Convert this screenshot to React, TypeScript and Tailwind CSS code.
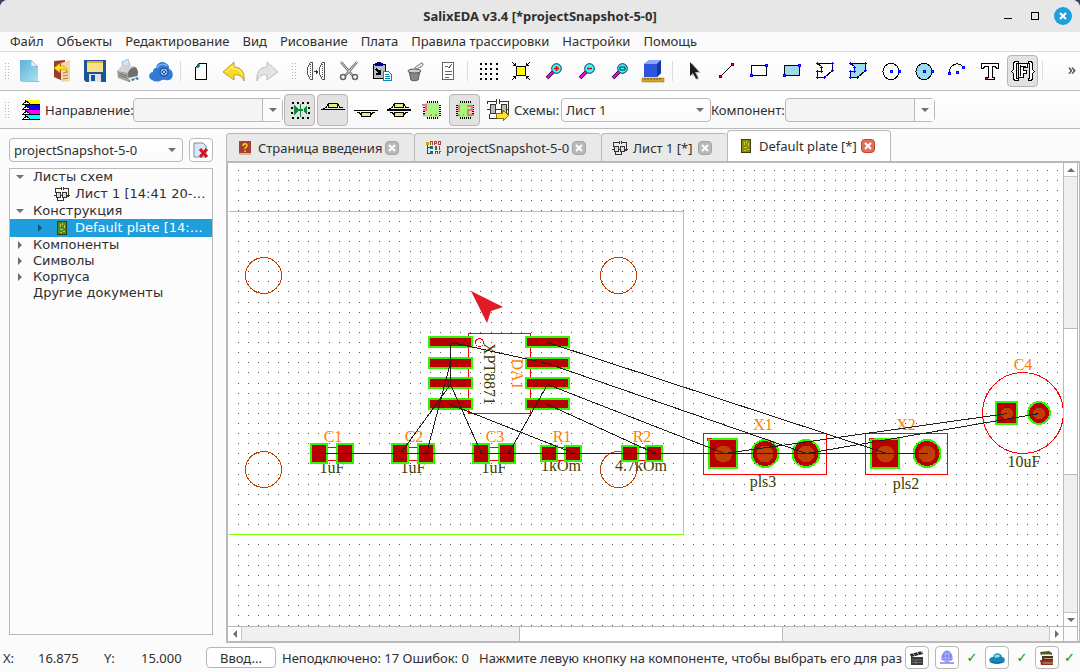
import React from 'react';

/* ---------- toolbar icons, all on a 24px box ---------- */

interface IconProps {
  children: React.ReactNode;
  crisp?: boolean;
}

function Icon({ children, crisp = false }: IconProps) {
  return (
    <svg
      className="size-6 shrink-0"
      viewBox="0 0 24 24"
      fill="none"
      aria-hidden="true"
      shapeRendering={crisp ? 'crispEdges' : 'auto'}
    >
      {children}
    </svg>
  );
}

const NewIcon = () => (
  <Icon>
    <defs>
      <linearGradient id="newDoc" x1="0" y1="0" x2="1" y2="1">
        <stop offset="0" stopColor="#5fb0d6" />
        <stop offset="1" stopColor="#a9e0f2" />
      </linearGradient>
    </defs>
    <path d="M5 22h17l1 1H4z" fill="#8a8a8a" opacity=".6" />
    <path d="M3 1h11l7 7v14H3z" fill="url(#newDoc)" />
    <path d="M14 1l7 7c-3-1-5-1-7 0z" fill="#d9f3fb" stroke="#5fb0d6" strokeWidth=".6" />
  </Icon>
);

const OpenIcon = () => (
  <Icon>
    <path d="M4 2l11-1v20l-2 1-9-4z" fill="#9c3b2c" />
    <path d="M11 4l9-3v21l-9 1z" fill="#f3d7a8" />
    <path d="M13 14l5-1M13 17l5-1M13 20l5-1" stroke="#b87b4c" />
    <path d="M4 9l6-5v3c4-.5 7 1 7 6-1.500-2.500-4-3-7-2.500V14z" fill="#ffe11f" stroke="#b98a00" strokeWidth=".6" />
  </Icon>
);

const SaveIcon = () => (
  <Icon>
    <path d="M1 1h22v22H3l-2-2z" fill="#1d5494" />
    <path d="M4 2h16v11H4z" fill="#fbe08a" />
    <path d="M4 2h16v2H4z" fill="#e2a93c" />
    <path d="M6 15h12v8H6z" fill="#dfe3e8" />
    <path d="M8 16h4v6H8z" fill="#1d5494" />
  </Icon>
);

const PrinterIcon = () => (
  <Icon>
    <path d="M6 3l6-3 2 6-7 3z" fill="#cfe4fb" stroke="#86a7cc" strokeWidth=".7" />
    <path d="M1 12l6-6 13 2 2 5-1 6-8 4-11-4z" fill="#a2a2a2" />
    <path d="M1 12l6-6 13 2-8 6z" fill="#d4d4d4" />
    <path d="M12 14c1-5 7-8 9-4l1 3-1 6-8 4z" fill="#6e6e6e" />
    <path d="M3 14l8 3M3 16l8 3" stroke="#777" />
    <path d="M12 19l9-2 3 3-9 3z" fill="#e9f2ff" />
    <path d="M15 20l3-1 1 2-3 1z" fill="#38a838" />
    <path d="M19 19l2-1 2 2-2 1z" fill="#3e6be0" />
  </Icon>
);

const CloudIcon = () => (
  <Icon>
    <path d="M3 21c-4-2-4-7 1-8 0-3 1-4 3-4 1-6 7-8 11-4 2 1 2 3 2 5 4 1 5 7 2 10-4 3-6 0-9 1-4 2-7 2-10 0z" fill="#2f7bd6" />
    <path d="M8 9c2-4 7-5 10-2" stroke="#7db5f3" strokeWidth="1.500" />
    <circle cx="15" cy="13" r="4.500" fill="#1a4e9b" />
    <circle cx="15" cy="13" r="3" stroke="#a9c8ee" />
    <path d="M13 11l4 4M17 11l-4 4" stroke="#a9c8ee" />
  </Icon>
);

const PageIcon = () => (
  <Icon crisp>
    <path d="M10.500 4.500h7v16h-11v-12z" fill="#fff" stroke="#000" />
    <path d="M7 8l3-4v4z" fill="#008080" stroke="#000" strokeWidth=".5" />
  </Icon>
);

const UndoIcon = () => (
  <Icon>
    <path d="M1 13L12 3v5c7 0 11 5 10 14-2-5-5-7-10-6v5z" fill="#fbdc1c" stroke="#a88c2c" strokeWidth=".8" />
    <path d="M4 13l7-6v3c5 0 8 2 9 6" stroke="#fff6a8" />
  </Icon>
);

const RedoIcon = () => (
  <Icon>
    <path d="M23 13L12 3v5C5 8 1 13 2 22c2-5 5-7 10-6v5z" fill="#e3e3e3" stroke="#b4b4b4" strokeWidth=".8" />
  </Icon>
);

const MirrorIcon = () => (
  <Icon crisp>
    <path d="M8.500 3.500h-2l-3 5v7l3 5h2z" stroke="#555" />
    <path d="M6.500 5v14" stroke="#555" strokeDasharray="1 1" />
    <path d="M20.500 3.500h-2l-3 5v7l3 5h2z" stroke="#555" />
    <path d="M18.500 5v14" stroke="#555" strokeDasharray="1 1" />
    <path d="M10 12.500h4M12 10.500v4M13 11.500v2" stroke="#333" />
  </Icon>
);

const CutIcon = () => (
  <Icon>
    <path d="M4 3l12 14M20 3L8 17" stroke="#666" strokeWidth="2.500" />
    <path d="M4 3l12 14M20 3L8 17" stroke="#fff" strokeWidth=".8" />
    <circle cx="6" cy="18" r="2.500" stroke="#666" strokeWidth="1.500" />
    <circle cx="18" cy="18" r="2.500" stroke="#666" strokeWidth="1.500" />
  </Icon>
);

const PasteIcon = () => (
  <Icon crisp>
    <path d="M3.500 5.500h12v14h-12z" fill="#b8bcc6" stroke="#000" />
    <path d="M5 4h8v3H5zM7 3h4v2H7z" fill="#0000a0" />
    <path d="M6 10l4 4M10 11v4H6" stroke="#000" strokeWidth="1.500" />
    <path d="M13.500 12.500h5l3 3v6h-8z" fill="#fff" stroke="#008cba" />
    <path d="M15 15.500h4M15 17.500h5M15 19.500h5" stroke="#008cba" />
  </Icon>
);

const TrashIcon = () => (
  <Icon>
    <path d="M6 12h11l-2 9c-2 1-5 1-7 0z" fill="#888" stroke="#555" />
    <ellipse cx="11.500" cy="12" rx="6.500" ry="2" fill="#ccc" stroke="#555" />
    <path d="M12 9c0-2 5-3 6-5 3 0 2 3 0 4-2 0-3 1-4 2z" fill="#eee" stroke="#666" />
  </Icon>
);

const CheckListIcon = () => (
  <Icon crisp>
    <path d="M6.500 3.500h11v17h-11z" fill="#fff" stroke="#666" />
    <path d="M9 7.500h3M9 12.500h7M9 15.500h7M9 18h4" stroke="#666" />
    <path d="M11 7l2 2 3-4" stroke="#666" />
  </Icon>
);

const GridIcon = () => (
  <Icon crisp>
    {[4, 9, 14, 19].map(y =>
      [4, 9, 14, 20].map(x => <rect key={`${x}-${y}`} x={x} y={y} width="2" height="2" fill="#000" />)
    )}
  </Icon>
);

const FitIcon = () => (
  <Icon crisp>
    <path d="M7.500 7.500h9v9h-9z" fill="#ff0" stroke="#000" />
    <path d="M3 3l4 4M21 3l-4 4M3 21l4-4M21 21l-4-4M4 6.500h3M6.500 4v3M20 6.500h-3M17.500 4v3M4 17.500h3M6.500 17v3M20 17.500h-3M17.500 17v3" stroke="#000" />
  </Icon>
);

function ZoomIcon({ kind }: { kind: 'in' | 'out' | 'all' }) {
  return (
    <Icon>
      <path d="M5 19l6-6" stroke="#000" strokeWidth="3.500" />
      <path d="M5 19l6-6" stroke="#f0f" strokeWidth="2.200" />
      <circle cx="14.500" cy="9.500" r="4.800" fill="#3ff" stroke="#124" />
      {kind !== 'all' && <path d="M12 9.500h5" stroke="#e00" strokeWidth="1.600" />}
      {kind === 'in' && <path d="M14.500 7v5" stroke="#e00" strokeWidth="1.600" />}
      {kind === 'all' && <path d="M12 8h5v3h-5z" stroke="#124" />}
    </Icon>
  );
}

const CubeIcon = () => (
  <Icon>
    <path d="M3 5l5-4h12v13l-4 4H3z" fill="#2a55dc" />
    <path d="M3 5l5-4h12l-4 4z" fill="#86a9ff" />
    <path d="M16 5l4-4v13l-4 4z" fill="#1636a8" />
    <path d="M1 19h22v4H1z" fill="#d8a42a" stroke="#8a6410" strokeWidth=".5" />
    <path d="M4 19v2M7 19v2M10 19v2M13 19v2M16 19v2M19 19v2" stroke="#6b4c08" strokeWidth=".8" />
  </Icon>
);

const PointerIcon = () => (
  <Icon>
    <path d="M11 4v14l3-3 2 6 2-1-2-6h4z" fill="#999" opacity=".6" />
    <path d="M9 3v14l3-3 3 6 2-1-3-6h4z" fill="#1c1c1c" />
  </Icon>
);

function Pins({ at }: { at: [number, number][] }) {
  return (
    <>
      {at.map(([x, y]) => (
        <g key={`${x}-${y}`}>
          <rect x={x - 1} y={y - 1} width="3" height="3" fill="#00f" />
          <rect x={x} y={y} width="1" height="1" fill="#f06" />
        </g>
      ))}
    </>
  );
}

const LineIcon = () => (
  <Icon crisp>
    <path d="M6 18L18 6" stroke="#000" />
    <Pins at={[[6, 17], [18, 5]]} />
  </Icon>
);

function RectIcon({ fill }: { fill: string }) {
  return (
    <Icon crisp>
      <path d="M4.500 6.500h15v10h-15z" fill={fill} stroke="#000" />
      <Pins at={[[4, 16], [19, 6]]} />
    </Icon>
  );
}

function PolygonIcon({ fill }: { fill: string }) {
  return (
    <Icon crisp>
      <path d="M4.500 4.500h15v7l-8 7h-7v-6h4v-5z" fill={fill} stroke="#000" />
      {[[4, 4], [19, 4], [19, 11], [11, 18], [4, 18], [4, 12], [8, 12], [8, 8]].map(([x, y]) => (
        <path key={`${x}-${y}`} d={`M${x - 1} ${y + 0.5}h3M${x + 0.5} ${y - 1}v3`} stroke="#00f" />
      ))}
    </Icon>
  );
}

function CircleIcon({ fill }: { fill: string }) {
  return (
    <Icon crisp>
      <circle cx="12" cy="12.500" r="8" fill={fill} stroke="#000" />
      <Pins at={[[12, 12], [20, 12]]} />
    </Icon>
  );
}

const ArcIcon = () => (
  <Icon crisp>
    <path d="M4.500 14C4 5 14 2 18.500 8.500" stroke="#000" />
    <Pins at={[[4, 14], [12, 13], [18, 8]]} />
  </Icon>
);

const TextIcon = () => (
  <Icon crisp>
    <path d="M3.500 4.500h17v5h-2l-1-2h-3v11h2v2h-8v-2h2v-11h-4l-1 2h-2z" fill="#fff" stroke="#000" />
    <Pins at={[[8, 19]]} />
  </Icon>
);

const ParamIcon = () => (
  <Icon crisp>
    <path d="M7.500 2.500h-4l-1 2v6l-2 2 2 2v5l1 2h4v-2h-2v-15h2zM17.500 2.500h3l1 2v6l2 2-2 2v5l-1 2h-3v-2h1v-15h-1z" fill="#fff" stroke="#000" />
    <path d="M7.500 4.500h9v4h-4v3h3v3h-3v4h-5v-14z" fill="#fff" stroke="#000" />
    <path d="M9.500 6v11M10 7h5" stroke="#000" />
  </Icon>
);

const LayersIcon = () => (
  <svg className="w-[18px] h-5 shrink-0" viewBox="0 0 18 20" fill="none" shapeRendering="crispEdges" aria-hidden="true">
    {['#ff0', '#00f', '#f0f', '#0ff'].map((fill, i) => (
      <g key={fill}>
        <path d={`M3 ${i * 5}h15v4H7z`} fill={fill} />
        <path d={`M0 ${i * 5 + 4.500}h18M3 ${i * 5}l5 4M1 ${i * 5 + 4}l4-3`} stroke="#000" />
      </g>
    ))}
  </svg>
);

const MeetIcon = () => (
  <Icon crisp>
    {[4, 9, 14, 19].map(x => (
      <g key={x} fill="#000">
        <rect x={x} y="4" width="2" height="2" />
        <rect x={x} y="19" width="2" height="2" />
      </g>
    ))}
    <path d="M3 9h2v2H3zM3 14h2v2H3zM20 9h2v2h-2zM20 14h2v2h-2z" fill="#000" />
    <path d="M6 7l5 5-5 5zM19 7l-5 5 5 5zM12 6h1v13h-1zM9 11h7v2H9z" fill="#0a8a3c" />
  </Icon>
);

function SideIcon({ top, bottom }: { top?: boolean; bottom?: boolean }) {
  return (
    <Icon crisp>
      {top && (
        <>
          <path d="M0 11.500h24M2 10.500h2M4 9.500h1l2-3h10l2 3h3" stroke="#000" />
          <path d="M7.500 5.500h9v4h-9z" fill="#d4f77c" stroke="#000" />
        </>
      )}
      {bottom && (
        <>
          <path d="M0 12.500h24M3 14.500h2l3 3h8l3-3h2" stroke="#000" />
          <path d="M7.500 14.500h9v4h-9z" fill={top ? '#fbd58a' : '#d4f77c'} stroke="#000" />
        </>
      )}
    </Icon>
  );
}

function ChipIcon({ numbered }: { numbered?: boolean }) {
  return (
    <Icon crisp>
      {[7, 9, 11, 13, 15, 17].map(p => (
        <path key={p} d={`M${p}.5 3v18M3 ${p}.5h18`} stroke="#000" />
      ))}
      <path d="M5 5h14v14H5z" fill="#a6f77c" />
      {numbered ? (
        <path d="M6 7v7M5 17h2M10 17h1M14 8h5v4h-4v5h6" stroke="#f0708c" strokeWidth="2" />
      ) : (
        <path d="M2 7h4v5H3M4 16v2M10 17h2M15 17h2" stroke="#f0708c" strokeWidth="2" />
      )}
    </Icon>
  );
}

const SheetIcon = ({ className = 'w-4 h-[14px]' }: { className?: string }) => (
  <svg className={`${className} shrink-0`} viewBox="0 0 16 14" fill="none" stroke="#333" shapeRendering="crispEdges" aria-hidden="true">
    <path d="M1.500 5.500v-4h5M9.500 1.500h5v8h-2M7.500 0v3M9.500 0v3M3.500 10v3h6v-2M0 8.500h16" />
    <path d="M2.500 5.500h4v5h-4zM8.500 5.500h4v5h-4z" fill="#ddd" />
  </svg>
);

const SheetGoIcon = () => (
  <Icon crisp>
    <path d="M1.500 6v-3h9M13.500 3.500h9v14M10.500 1v5M13.500 1v5M3.500 16v4h7M1 11.500h22" stroke="#333" />
    <path d="M4.500 6.500h5v9h-5zM15.500 6.500h5v9h-5z" fill="#bbb" stroke="#333" />
    <path d="M10 15h6v-3l7 5-6 6v-3h-6z" fill="#ffe034" stroke="#8d7400" />
  </Icon>
);

const PlateIcon = ({ fill }: { fill: string }) => (
  <svg className="w-[10px] h-[14px] shrink-0" viewBox="0 0 10 14" fill="none" shapeRendering="crispEdges" aria-hidden="true">
    <path d="M.5.5h9v13h-9z" fill={fill} stroke="#3b3d10" />
    <path d="M3.500 3v3M5.500 2v2M7.500 4v3M3 8.500h3M6 10.500h2M3 11.500h2" stroke="#c2c848" />
  </svg>
);

const BookIcon = () => (
  <svg className="w-3 h-4 shrink-0" viewBox="0 0 12 16" fill="none" aria-hidden="true">
    <path d="M0 1h12v14H0z" fill="#a3402f" />
    <path d="M0 13h12v2H0z" fill="#d9b899" />
    <path d="M4 6c0-3 4-3 4-.5C8 7 6 7 6 9M6 10.500v1.500" stroke="#ffd21f" strokeWidth="1.500" />
  </svg>
);

const ProjectIcon = () => (
  <svg className="size-4 shrink-0" viewBox="0 0 16 16" fill="none" shapeRendering="crispEdges" aria-hidden="true">
    <path d="M2.500 3v10h4M2.500 7.500h4" stroke="#444" />
    <path d="M1 2h3v3H1z" fill="#b8a800" />
    <path d="M5 6h3v3H5zM5 11h3v3H5z" fill="#087878" />
    <path d="M5.500 5V1.500h2V5M9.500 5V1.500h2v2h-2M13.500 1.500h2v3h-2z" stroke="#b04040" />
    <path d="M10.500 6.500h1v3h-1zM15 6.500h-1v3h1M10.500 14v-2.500h2V14M14.500 14v-2.500H16" stroke="#555" />
  </svg>
);

const DeleteDocIcon = () => (
  <svg className="size-4" viewBox="0 0 16 16" fill="none" aria-hidden="true">
    <path d="M1 1h9l3 3v11H1z" fill="#dbe7f6" stroke="#7b8ea8" />
    <path d="M7 7l7 8M14 7l-7 8" stroke="#d4141e" strokeWidth="3" />
  </svg>
);

const ClapperIcon = () => (
  <svg className="size-4" viewBox="0 0 16 16" aria-hidden="true">
    <path d="M2 7h12v8H2z" fill="#3a3a3a" />
    <path d="M1 4l12-3 1 3L2 7z" fill="#222" />
    <path d="M4 3l1.500 2.500M8 2l1.500 2.500M12 1l1 2" stroke="#ddd" />
    <path d="M3 10h10M3 12.500h10M7 10v4" stroke="#8a8a8a" strokeWidth=".6" />
  </svg>
);

const GlobeIcon = () => (
  <svg className="size-4" viewBox="0 0 16 16" fill="none" aria-hidden="true">
    <path d="M3 10c-1-12 11-12 10 0z" fill="#aab0fa" stroke="#8086f0" />
    <path d="M8 1v10M3 6h10M5.500 2.500c-1 3-1 5 0 8M10.500 2.500c1 3 1 5 0 8" stroke="#7278ea" strokeWidth=".8" />
    <path d="M1 12h4l1-1h4l1 1h4v2H1z" fill="#9aa0f5" />
  </svg>
);

const BlueCloudIcon = () => (
  <svg className="size-4" viewBox="0 0 16 16" aria-hidden="true">
    <path d="M2 13c-3-2-2-6 2-6 1-5 8-5 9 0 3 0 4 4 1 6-3 1-9 1-12 0z" fill="#1489b8" />
    <path d="M5 7c1-3 5-3 6-1-1 2-4 2-6 1z" fill="#7fe0f8" />
    <path d="M3 12c3 1.500 7 1.500 10 0" stroke="#075b80" fill="none" />
  </svg>
);

const BooksIcon = () => (
  <svg className="size-4" viewBox="0 0 16 16" aria-hidden="true">
    <path d="M1 2l9-1 3 2v2H2z" fill="#4e5b2c" />
    <path d="M3 6h11v4H3z" fill="#473020" />
    <path d="M1 10h13v5H2z" fill="#8c3126" />
    <path d="M3 4.500h9M5 8.500h9M4 13h10" stroke="#d8c49a" strokeWidth=".8" />
  </svg>
);

/* ---------- small widgets ---------- */

function ToolButton({ label, active, children }: { label: string; active?: boolean; children: React.ReactNode }) {
  return (
    <button
      title={label}
      aria-label={label}
      className={`flex h-8 w-[31px] mx-px shrink-0 items-center justify-center rounded-sm border ${
        active ? 'border-[#b6b6b6] bg-[#e2e2e2]' : 'border-transparent'
      }`}
    >
      {children}
    </button>
  );
}

const Separator = () => <div className="mx-[3px] h-5 w-px shrink-0 bg-[#dcdcdc]" />;

const Handle = () => (
  <svg className="w-4 h-4 shrink-0" viewBox="0 0 16 16" shapeRendering="crispEdges" aria-hidden="true">
    {[0, 3, 6, 9, 12, 15].map(y => (
      <path key={y} d={`M9 ${y}h1v1h-1zM12 ${y}h1v1h-1z`} fill="#b5b5b5" />
    ))}
  </svg>
);

const Caret = ({ dir = 'down', color = '#6f6f6f' }: { dir?: 'down' | 'right' | 'left' | 'up'; color?: string }) => {
  const paths = { down: 'M0 2h8L4 6z', up: 'M0 6h8L4 2z', right: 'M2 0v8l4-4z', left: 'M6 0v8L2 4z' };
  return (
    <svg className="size-2 shrink-0" viewBox="0 0 8 8" aria-hidden="true">
      <path d={paths[dir]} fill={color} />
    </svg>
  );
};

function Combo({ id, value, editable, className }: { id: string; value: string; editable?: boolean; className: string }) {
  return (
    <div className={`relative shrink-0 ${className}`}>
      <select
        id={id}
        aria-label={id}
        defaultValue={value}
        className={`h-6 w-full appearance-none rounded-sm border border-[#b9b9b9] pl-1 pr-6 text-[#2f2f2f] ${
          editable ? 'bg-[#f4f4f4]' : 'bg-gradient-to-b from-white to-[#fafafa]'
        }`}
      >
        <option>{value}</option>
      </select>
      <span
        className={`pointer-events-none absolute inset-y-px right-px flex w-5 items-center justify-center ${
          editable ? 'border-l border-[#b9b9b9] bg-[#fbfbfb]' : ''
        }`}
      >
        <Caret />
      </span>
    </div>
  );
}

function Tab({ title, icon, active, className }: { title: string; icon: React.ReactNode; active?: boolean; className: string }) {
  return (
    <div
      role="tab"
      aria-selected={!!active}
      className={`flex shrink-0 items-center gap-[3px] rounded-t-sm border border-b-0 border-[#b9b9b9] px-2 pr-[15px] ${
        active ? 'h-[31px] bg-white' : 'h-7 border-r-0 bg-[#e9e9e9]'
      } ${className}`}
    >
      <span className="flex w-5 shrink-0 justify-center">{icon}</span>
      <span className="flex-1 whitespace-nowrap">{title}</span>
      <button
        aria-label={`Закрыть ${title}`}
        className={`flex size-[14px] shrink-0 items-center justify-center rounded-sm border ${
          active ? 'border-[#c9412c] bg-[#e0705c]' : 'border-[#a3a3a3] bg-[#b9b9b9]'
        }`}
      >
        <svg className="size-2" viewBox="0 0 8 8" aria-hidden="true">
          <path d="M1 1l6 6M7 1L1 7" stroke="#fff" strokeWidth="2" />
        </svg>
      </button>
    </div>
  );
}

/* ---------- project tree ---------- */

interface TreeItem {
  text: string;
  level: number;
  caret?: 'down' | 'right';
  icon?: React.ReactNode;
  selected?: boolean;
}

const TREE: TreeItem[] = [
  { text: 'Листы схем', level: 0, caret: 'down' },
  { text: 'Лист 1 [14:41 20-…', level: 1, icon: <SheetIcon /> },
  { text: 'Конструкция', level: 0, caret: 'down' },
  { text: 'Default plate [14:…', level: 1, caret: 'right', icon: <PlateIcon fill="#4f8a1e" />, selected: true },
  { text: 'Компоненты', level: 0, caret: 'right' },
  { text: 'Символы', level: 0, caret: 'right' },
  { text: 'Корпуса', level: 0, caret: 'right' },
  { text: 'Другие документы', level: 0 },
];

function ProjectTree() {
  return (
    <ul className="flex-1 border border-[#b9b9b9] bg-[#fcfcfc] font-['DejaVu_Sans'] text-[13px]">
      {TREE.map(item => (
        <li
          key={item.text}
          className={`flex items-center ${item.level ? 'h-[18px] pl-5' : 'h-4'} ${
            item.selected ? 'bg-[#1f9ede] text-white' : 'text-[#2f2f2f]'
          }`}
        >
          <span className="flex w-[23px] shrink-0 items-center pl-1.5">
            {item.caret && <Caret dir={item.caret} color={item.selected ? '#1c4f74' : '#6f6f6f'} />}
          </span>
          {item.icon && <span className="flex w-[22px] shrink-0 justify-center pr-1">{item.icon}</span>}
          <span className="whitespace-nowrap">{item.text}</span>
        </li>
      ))}
    </ul>
  );
}

/* ---------- board drawing ---------- */

const PAD = { fill: '#b80000', stroke: '#32f500', strokeWidth: 2 };
const HOLE = '#bf4000';

// ratsnest: x1, y1, x2, y2
const NETS = [
  [450, 342, 450, 384],
  [451, 342, 547, 363],
  [547, 342, 886, 453],
  [547, 363, 806, 453],
  [547, 384, 724, 453],
  [547, 404, 655, 453],
  [547, 384, 508, 453],
  [450, 404, 574, 453],
  [450, 384, 400, 453],
  [450, 384, 481, 453],
  [450, 362, 426, 453],
  [319, 453, 927, 453],
  [724, 453, 1007, 413],
  [806, 453, 1039, 413],
];

const CHIPS = [
  { name: 'C1', value: '1uF', x: 310, w: 18, gap: 26, y: 443, h: 21, cx: 332 },
  { name: 'C2', value: '1uF', x: 391, w: 18, gap: 26, y: 443, h: 21, cx: 413 },
  { name: 'C3', value: '1uF', x: 472, w: 18, gap: 26, y: 443, h: 21, cx: 494 },
  { name: 'R1', value: '1kOm', x: 540, w: 18, gap: 24, y: 445, h: 17, cx: 561 },
  { name: 'R2', value: '4.7kOm', x: 621, w: 18, gap: 24, y: 445, h: 17, cx: 641 },
];

function Dots() {
  const dots: string[] = [];
  for (let row = 0; row < 100; row++) {
    for (let col = 0; col < 190; col++) {
      dots.push(`M${Math.floor(238 + col * 10.12)} ${Math.floor(170.5 + row * 10.12)}h1v1h-1z`);
    }
  }
  return <path d={dots.join('')} fill="#555" />;
}

function Board() {
  return (
    <svg className="block size-full" role="img" aria-label="Default plate" shapeRendering="crispEdges">
      <g transform="translate(-229 -163)" fontFamily="'Liberation Serif', serif" fontSize="16" textAnchor="middle">
        <Dots />
        <path d="M229 211.500h454.500v323H229" fill="none" stroke="#80ff00" />
        {[[263.5, 275.5], [618.5, 275.5], [263.5, 469.5], [618.5, 469.5]].map(([x, y]) => (
          <circle key={`${x}-${y}`} cx={x} cy={y} r="18" fill="none" stroke={HOLE} />
        ))}

        <rect x="468.500" y="333.500" width="62" height="80" fill="none" stroke="#f00" />
        {[336, 357, 377, 398].map(y => (
          <g key={y} {...PAD}>
            <rect x="429" y={y + 1} width="43" height="10" />
            <rect x="526" y={y + 1} width="43" height="10" />
          </g>
        ))}
        <circle cx="479.500" cy="342.500" r="4" fill="none" stroke="#f00" />
        <text transform="translate(484 374) rotate(90)" fill="#404000">XPT8871</text>
        <text transform="translate(512 374) rotate(90)" fill="#ff8000">DA1</text>

        {CHIPS.map(c => (
          <g key={c.name}>
            <text x={c.cx + 1} y="442" fill="#ff8000">{c.name}</text>
            <text x={c.cx} y={c.h > 20 ? 473 : 471} fill="#404000">{c.value}</text>
            <path d={`M${c.x + c.w} 447.5h${c.gap - c.w}M${c.x + c.w} 460.5h${c.gap - c.w}`} stroke="#f00" />
            <rect x={c.x + 1} y={c.y + 1} width={c.w - 2} height={c.h - 2} {...PAD} />
            <rect x={c.x + c.gap + 1} y={c.y + 1} width={c.w - 2} height={c.h - 2} {...PAD} />
          </g>
        ))}

        <rect x="703.500" y="433.500" width="123" height="41" fill="none" stroke="#f00" />
        <rect x="709" y="439" width="28" height="29" {...PAD} />
        <circle cx="765" cy="453.500" r="13.500" {...PAD} />
        <circle cx="806" cy="453.500" r="13.500" {...PAD} />
        <rect x="865.500" y="433.500" width="82" height="41" fill="none" stroke="#f00" />
        <rect x="871" y="439" width="28" height="29" {...PAD} />
        <circle cx="927" cy="453.500" r="13.500" {...PAD} />
        {[723.5, 765, 806, 885.5, 927].map(x => (
          <circle key={x} cx={x} cy="454" r="8.500" fill={HOLE} />
        ))}
        <path d="M707 441v-3h5M869 441v-3h5" fill="none" stroke="#c22" />

        <circle cx="1023" cy="413" r="40.500" fill="none" stroke="#f00" />
        <rect x="996" y="402" width="21" height="22" {...PAD} />
        <circle cx="1039" cy="413" r="11" {...PAD} />
        <circle cx="1007" cy="413.500" r="6" fill={HOLE} />
        <circle cx="1039" cy="413.500" r="6" fill={HOLE} />

        <g fill="#ff8000">
          <text x="763" y="430">X1</text>
          <text x="906" y="430">X2</text>
          <text x="1023" y="370">C4</text>
        </g>
        <g fill="#404000">
          <text x="763" y="487">pls3</text>
          <text x="906" y="489">pls2</text>
          <text x="1024" y="467">10uF</text>
        </g>

        {NETS.map(([x1, y1, x2, y2]) => (
          <path key={`${x1}-${y1}-${x2}-${y2}`} d={`M${x1 + 0.5} ${y1 + 0.5}L${x2 + 0.5} ${y2 + 0.5}`} stroke="#202020" />
        ))}
        <path d="M471 291l32 16-12 4-4 12z" fill="#e01b24" shapeRendering="auto" />
      </g>
    </svg>
  );
}

const MENU = ['Файл', 'Объекты', 'Редактирование', 'Вид', 'Рисование', 'Плата', 'Правила трассировки', 'Настройки', 'Помощь'];

function StatusButton({ label, children }: { label: string; children: React.ReactNode }) {
  return (
    <button aria-label={label} className="flex h-[23px] w-6 shrink-0 items-center justify-center rounded-sm border border-[#b6b6b6] bg-white">
      {children}
    </button>
  );
}

const Tick = ({ className = 'w-[26px]' }: { className?: string }) => (
  <span className={`${className} shrink-0 text-center font-['DejaVu_Sans'] text-[#108a10]`}>✓</span>
);

export default function App() {
  return (
    <div className="bg-[#34475c]">
      <div className="flex h-screen flex-col overflow-hidden rounded-t-lg bg-[#fbfbfb] font-['Noto_Sans',sans-serif] text-[13px] leading-4 text-[#2f2f2f]">
        <header className="flex h-8 shrink-0 items-center bg-[#e7e7e7] px-2">
          <div className="w-20" />
          <h1 className="flex-1 text-center text-[13px] font-bold">SalixEDA v3.4 [*projectSnapshot-5-0]</h1>
          <div className="flex w-20 items-center justify-end gap-[15px]">
            <button aria-label="Свернуть" className="mt-1 h-px w-2 bg-black" />
            <button aria-label="Развернуть" className="ml-1 size-2 border border-black" />
            <button aria-label="Закрыть" className="flex size-[18px] items-center justify-center rounded-full bg-[#1f9ede]">
              <svg className="size-2" viewBox="0 0 8 8" aria-hidden="true">
                <path d="M1 1l6 6M7 1L1 7" stroke="#fff" strokeWidth="2" />
              </svg>
            </button>
          </div>
        </header>

        <nav className="flex h-5 shrink-0 items-center gap-[13px] border-b border-[#dadada] px-[10px] pb-0.5">
          {MENU.map(item => (
            <button key={item} className="whitespace-nowrap">{item}</button>
          ))}
        </nav>

        <div className="flex h-[39px] shrink-0 items-center overflow-hidden border-b border-[#b9b9b9] bg-gradient-to-b from-white to-[#f8f8f8]">
          <div className="-ml-1 flex items-center">
            <Handle />
            <ToolButton label="Новый"><NewIcon /></ToolButton>
            <ToolButton label="Открыть"><OpenIcon /></ToolButton>
            <ToolButton label="Сохранить"><SaveIcon /></ToolButton>
            <ToolButton label="Печать"><PrinterIcon /></ToolButton>
            <ToolButton label="Облако"><CloudIcon /></ToolButton>
            <Separator />
            <ToolButton label="Страница"><PageIcon /></ToolButton>
            <ToolButton label="Отменить"><UndoIcon /></ToolButton>
            <ToolButton label="Повторить"><RedoIcon /></ToolButton>
            <Handle />
            <ToolButton label="Отразить"><MirrorIcon /></ToolButton>
            <ToolButton label="Вырезать"><CutIcon /></ToolButton>
            <ToolButton label="Вставить"><PasteIcon /></ToolButton>
            <ToolButton label="Удалить"><TrashIcon /></ToolButton>
            <ToolButton label="Свойства"><CheckListIcon /></ToolButton>
            <Separator />
            <ToolButton label="Сетка"><GridIcon /></ToolButton>
            <ToolButton label="Вписать"><FitIcon /></ToolButton>
            <ToolButton label="Увеличить"><ZoomIcon kind="in" /></ToolButton>
            <ToolButton label="Уменьшить"><ZoomIcon kind="out" /></ToolButton>
            <ToolButton label="Окно"><ZoomIcon kind="all" /></ToolButton>
            <ToolButton label="3D"><CubeIcon /></ToolButton>
            <Separator />
            <ToolButton label="Выбор"><PointerIcon /></ToolButton>
            <ToolButton label="Линия"><LineIcon /></ToolButton>
            <ToolButton label="Прямоугольник"><RectIcon fill="#fff" /></ToolButton>
            <ToolButton label="Закрашенный прямоугольник"><RectIcon fill="#9adcec" /></ToolButton>
            <ToolButton label="Полигон"><PolygonIcon fill="#fff" /></ToolButton>
            <ToolButton label="Закрашенный полигон"><PolygonIcon fill="#9adcec" /></ToolButton>
            <ToolButton label="Окружность"><CircleIcon fill="#fff" /></ToolButton>
            <ToolButton label="Круг"><CircleIcon fill="#9adcec" /></ToolButton>
            <ToolButton label="Дуга"><ArcIcon /></ToolButton>
            <ToolButton label="Текст"><TextIcon /></ToolButton>
            <ToolButton label="Параметр" active><ParamIcon /></ToolButton>
            <Separator />
          </div>
          <button aria-label="Ещё" className="ml-auto pr-1 pb-1 text-base">»</button>
        </div>

        <div className="flex h-[38px] shrink-0 items-center overflow-hidden border-b border-[#b9b9b9] bg-gradient-to-b from-white to-[#f8f8f8]">
          <div className="-ml-1 flex w-[49px] shrink-0 items-center gap-[10px]">
            <Handle />
            <LayersIcon />
          </div>
          <label htmlFor="Направление" className="w-[88px] shrink-0 whitespace-nowrap">Направление:</label>
          <Combo id="Направление" value="" editable className="w-[150px]" />
          <ToolButton label="Сетка трассировки" active><MeetIcon /></ToolButton>
          <ToolButton label="Верхняя сторона" active><SideIcon top /></ToolButton>
          <ToolButton label="Нижняя сторона"><SideIcon bottom /></ToolButton>
          <ToolButton label="Обе стороны"><SideIcon top bottom /></ToolButton>
          <ToolButton label="Номера выводов"><ChipIcon /></ToolButton>
          <ToolButton label="Имена выводов" active><ChipIcon numbered /></ToolButton>
          <ToolButton label="Перейти к схеме"><SheetGoIcon /></ToolButton>
          <label htmlFor="Схемы" className="w-[47px] shrink-0 whitespace-nowrap">Схемы:</label>
          <Combo id="Схемы" value="Лист 1" className="w-[150px]" />
          <label htmlFor="Компонент" className="w-[74px] shrink-0 whitespace-nowrap">Компонент:</label>
          <Combo id="Компонент" value="" editable className="w-[150px]" />
        </div>

        <main className="flex min-h-0 flex-1">
          <aside className="flex w-[226px] shrink-0 flex-col gap-1.5 pt-[9px] pr-[13px] pb-2 pl-[9px]">
            <div className="flex gap-1.5">
              <Combo id="Проект" value="projectSnapshot-5-0" className="w-[174px]" />
              <button aria-label="Закрыть проект" className="flex h-6 flex-1 items-center justify-center rounded-sm border border-[#b9b9b9] bg-white">
                <DeleteDocIcon />
              </button>
            </div>
            <ProjectTree />
          </aside>

          <section className="flex min-w-0 flex-1 flex-col">
            <div role="tablist" className="flex h-8 shrink-0 items-end">
              <Tab title="Страница введения" icon={<BookIcon />} className="w-[188px]" />
              <Tab title="projectSnapshot-5-0" icon={<ProjectIcon />} className="w-[187px]" />
              <Tab title="Лист 1 [*]" icon={<SheetIcon />} className="w-[126px]" />
              <Tab title="Default plate [*]" icon={<PlateIcon fill="#8c8c00" />} active className="w-[164px]" />
            </div>
            <div className="flex min-h-0 flex-1 border-2 border-r-0 border-[#b9b9b9] bg-white">
              <div className="flex min-w-0 flex-1 flex-col">
                <div className="min-h-0 flex-1 overflow-hidden pl-px">
                  <Board />
                </div>
                <div className="flex h-[15px] shrink-0 items-stretch border-t border-[#b9b9b9]">
                  <span className="flex w-[14px] items-center justify-center border-r border-[#c6c6c6]"><Caret dir="left" /></span>
                  <span className="flex-[277] bg-[#f0f0f0]" />
                  <span className="flex-[262] border-x border-[#b9b9b9] bg-white" />
                  <span className="flex-[266] bg-[#f0f0f0]" />
                  <span className="flex w-[14px] items-center justify-center border-l border-[#c6c6c6]"><Caret dir="right" /></span>
                </div>
              </div>
              <div className="mr-px flex w-[15px] shrink-0 flex-col border-x border-[#b9b9b9]">
                <span className="flex h-[14px] items-center justify-center border-b border-[#c6c6c6]"><Caret dir="up" /></span>
                <span className="flex-[152] bg-[#f0f0f0]" />
                <span className="flex-[146] border-y border-[#b9b9b9] bg-white" />
                <span className="flex-[138] bg-[#f0f0f0]" />
                <span className="flex h-[14px] items-center justify-center border-t border-[#c6c6c6]"><Caret dir="down" /></span>
                <span className="h-[15px] border-t border-[#b9b9b9] bg-[#fbfbfb]" />
              </div>
              <div className="w-px shrink-0 bg-[#b9b9b9]" />
            </div>
          </section>
        </main>

        <footer className="flex h-[29px] shrink-0 items-center whitespace-nowrap pl-[3px]">
          <span className="w-[35px] shrink-0">X:</span>
          <span className="w-[66px] shrink-0">16.875</span>
          <span className="w-[37px] shrink-0">Y:</span>
          <span className="w-[65px] shrink-0">15.000</span>
          <button className="h-[21px] w-[70px] shrink-0 rounded-sm border border-[#b6b6b6] bg-white">Ввод...</button>
          <span className="w-[203px] shrink-0 pl-1.5">Неподключено: 17 Ошибок: 0</span>
          <span className="min-w-0 flex-1 overflow-hidden">Нажмите левую кнопку на компоненте, чтобы выбрать его для раз</span>
          <div className="flex shrink-0 items-center">
            <StatusButton label="Видео"><ClapperIcon /></StatusButton>
            <span className="w-1.5" />
            <StatusButton label="Сервер"><GlobeIcon /></StatusButton>
            <Tick />
            <StatusButton label="Облако"><BlueCloudIcon /></StatusButton>
            <Tick />
            <StatusButton label="Библиотека"><BooksIcon /></StatusButton>
            <Tick className="w-[21px]" />
          </div>
        </footer>
      </div>
    </div>
  );
}
